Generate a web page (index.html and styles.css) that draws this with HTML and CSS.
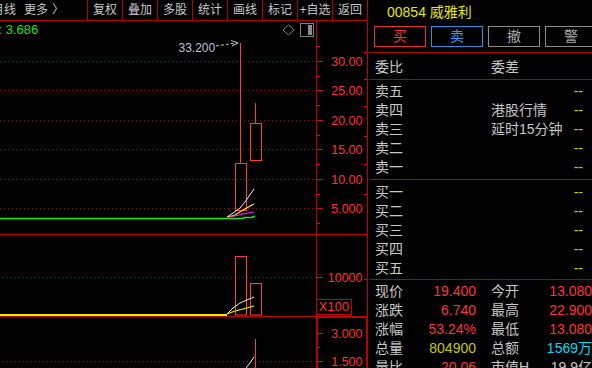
FILE: index.html
```html
<!DOCTYPE html>
<html lang="zh-CN">
<head>
<meta charset="utf-8">
<title>威雅利 00854</title>
<link rel="stylesheet" href="styles.css">
</head>
<body>
<div class="screen">
  <div class="main">
    <div class="toolbar">
      <div class="tb-left"><span class="tb-cut">月线</span><span class="tb-more">更多</span><span class="tb-arrow">〉</span></div>
      <div class="tb-btn">复权</div>
      <div class="tb-btn">叠加</div>
      <div class="tb-btn">多股</div>
      <div class="tb-btn">统计</div>
      <div class="tb-btn">画线</div>
      <div class="tb-btn">标记</div>
      <div class="tb-btn">+自选</div>
      <div class="tb-btn">返回</div>
    </div>

    <div class="pane pane-k">
      <svg class="plot" width="316" height="213" viewBox="0 0 316 213">
        <g class="grid">
          <line x1="0" y1="40.5" x2="316" y2="40.5"/>
          <line x1="0" y1="69.5" x2="316" y2="69.5"/>
          <line x1="0" y1="99.5" x2="316" y2="99.5"/>
          <line x1="0" y1="128.5" x2="316" y2="128.5"/>
          <line x1="0" y1="158.5" x2="316" y2="158.5"/>
          <line x1="0" y1="187.5" x2="316" y2="187.5"/>
        </g>
        <text class="ma-label" x="-1.5" y="12.5">: 3.686</text>
        <path class="ico" d="M283 9 L288.5 4 L294 9 L288.5 14 Z"/>
        <rect class="ico" x="300.5" y="2.5" width="13" height="13"/>
        <rect class="ico-fill" x="308" y="4" width="4" height="10"/>
        <text class="hi-label" x="178.5" y="30.5">33.200</text>
        <path class="arrow-dash" d="M216 25 L236 22"/>
        <path class="arrow-head" d="M231 19.5 L238 22 L232 25"/>
        <line class="candle" x1="240.5" y1="22" x2="240.5" y2="142.5"/>
        <rect class="candle" x="235.5" y="142.5" width="11" height="47"/>
        <line class="candle" x1="255.5" y1="82" x2="255.5" y2="102.5"/>
        <rect class="candle" x="250.5" y="102.5" width="11" height="37"/>
        <polyline class="ma-green" points="0,197.5 243,197.5 244,196.5 252,196.5 253,195.5 255,195.5"/>
        <polyline class="ma-white" points="227,196 233,192 240,187 245,181 254,168"/>
        <polyline class="ma-yellow" points="228,196 235,194 243,189 254,183"/>
        <polyline class="ma-magenta" points="230,196 243,193 254,191"/>
      </svg>
      <div class="axis">
        <svg width="50" height="213" viewBox="0 0 50 213">
          <g class="tick">
            <line x1="0" y1="25.5" x2="3" y2="25.5"/>
            <line x1="0" y1="40.5" x2="6" y2="40.5"/>
            <line x1="0" y1="55.5" x2="3" y2="55.5"/>
            <line x1="0" y1="69.5" x2="6" y2="69.5"/>
            <line x1="0" y1="84.5" x2="3" y2="84.5"/>
            <line x1="0" y1="99.5" x2="6" y2="99.5"/>
            <line x1="0" y1="114.5" x2="3" y2="114.5"/>
            <line x1="0" y1="128.5" x2="6" y2="128.5"/>
            <line x1="0" y1="143.5" x2="3" y2="143.5"/>
            <line x1="0" y1="158.5" x2="6" y2="158.5"/>
            <line x1="0" y1="173.5" x2="3" y2="173.5"/>
            <line x1="0" y1="187.5" x2="6" y2="187.5"/>
            <line x1="0" y1="202.5" x2="3" y2="202.5"/>
            <line x1="47" y1="31.5" x2="50" y2="31.5"/>
            <line x1="47" y1="58.5" x2="50" y2="58.5"/>
            <line x1="47" y1="85.5" x2="50" y2="85.5"/>
            <line x1="47" y1="115.5" x2="50" y2="115.5"/>
            <line x1="47" y1="143.5" x2="50" y2="143.5"/>
            <line x1="47" y1="173.5" x2="50" y2="173.5"/>
          </g>
          <g class="ax">
            <text x="45.5" y="44.5">30.00</text>
            <text x="45.5" y="73.5">25.00</text>
            <text x="45.5" y="103.5">20.00</text>
            <text x="45.5" y="132.5">15.00</text>
            <text x="45.5" y="162.5">10.00</text>
            <text x="45.5" y="191.5">5.000</text>
          </g>
        </svg>
      </div>
    </div>

    <div class="pane pane-vol">
      <svg class="plot" width="316" height="81" viewBox="0 0 316 81">
        <line class="grid" x1="3" y1="42.5" x2="316" y2="42.5"/>
        <rect class="candle" x="235.5" y="21.5" width="11" height="58.5"/>
        <rect class="candle" x="250.5" y="48.5" width="11" height="31.5"/>
        <polyline class="vol-yellow" points="0,80 227,80"/>
        <polyline class="ma-white" points="227,79 233,73 240,68 247,65 254,62"/>
        <polyline class="ma-yellow" points="227,79 235,76 243,74 254,71"/>
      </svg>
      <div class="axis">
        <svg width="50" height="81" viewBox="0 0 50 81">
          <g class="tick">
            <line x1="0" y1="42.5" x2="6" y2="42.5"/>
            <line x1="47" y1="44.5" x2="50" y2="44.5"/>
          </g>
          <g class="ax">
            <text x="45.5" y="46.5">10000</text>
          </g>
        </svg>
        <div class="x100">X100</div>
      </div>
    </div>

    <div class="pane pane-ind">
      <svg class="plot" width="316" height="51" viewBox="0 0 316 51">
        <line class="grid" x1="3" y1="44.5" x2="316" y2="44.5"/>
        <line class="candle" x1="255.5" y1="22" x2="255.5" y2="51"/>
        <polyline class="ma-white" points="246,51 250,46 254,40"/>
      </svg>
      <div class="axis axis-box">
        <svg width="50" height="51" viewBox="0 0 50 51">
          <g class="tick">
            <line x1="0" y1="16.5" x2="6" y2="16.5"/>
            <line x1="0" y1="30.5" x2="3" y2="30.5"/>
            <line x1="0" y1="44.5" x2="6" y2="44.5"/>
          </g>
          <g class="ax">
            <text x="45.5" y="20.5">3.000</text>
            <text x="45.5" y="48.5">1.500</text>
          </g>
        </svg>
      </div>
    </div>
  </div>

  <div class="panel">
    <div class="title">00854 威雅利</div>
    <div class="btns">
      <div class="btn btn-buy">买</div>
      <div class="btn btn-sell">卖</div>
      <div class="btn btn-gray">撤</div>
      <div class="btn btn-gray">警</div>
    </div>
    <div class="sec ratio">
      <span>委比</span><span>委差</span>
    </div>
    <div class="sec book">
      <div class="row"><span>卖五</span><span></span><span class="dash">--</span></div>
      <div class="row"><span>卖四</span><span>港股行情</span><span class="dash">--</span></div>
      <div class="row"><span>卖三</span><span>延时15分钟</span><span class="dash">--</span></div>
      <div class="row"><span>卖二</span><span></span><span class="dash">--</span></div>
      <div class="row"><span>卖一</span><span></span><span class="dash">--</span></div>
    </div>
    <div class="sec book book-buy">
      <div class="row"><span>买一</span><span></span><span class="dash">--</span></div>
      <div class="row"><span>买二</span><span></span><span class="dash">--</span></div>
      <div class="row"><span>买三</span><span></span><span class="dash">--</span></div>
      <div class="row"><span>买四</span><span></span><span class="dash">--</span></div>
      <div class="row"><span>买五</span><span></span><span class="dash">--</span></div>
    </div>
    <div class="sec stats">
      <div class="srow"><span>现价</span><span class="v red">19.400</span><span class="l2">今开</span><span class="v red">13.080</span></div>
      <div class="srow"><span>涨跌</span><span class="v red">6.740</span><span class="l2">最高</span><span class="v red">22.900</span></div>
      <div class="srow"><span>涨幅</span><span class="v red">53.24%</span><span class="l2">最低</span><span class="v red">13.080</span></div>
      <div class="srow"><span>总量</span><span class="v olive">804900</span><span class="l2">总额</span><span class="v cyan">1569万</span></div>
      <div class="srow"><span>量比</span><span class="v red">20.06</span><span class="l2">市值H</span><span class="v gray">19.9亿</span></div>
    </div>
  </div>
</div>
</body>
</html>
```

FILE: styles.css
```css
* {
  box-sizing: border-box;
  margin: 0;
  padding: 0;
}

html, body {
  background: #000;
}

body {
  width: 592px;
  height: 368px;
  overflow: hidden;
  font-family: "Liberation Sans", "Noto Sans CJK SC", sans-serif;
  color: #c8c8c8;
}

.screen {
  display: flex;
  width: 592px;
  height: 368px;
}

/* ---------- left chart ---------- */
.main {
  flex: none;
  width: 368px;
  height: 368px;
  border-right: 1px solid #c00000;
  display: flex;
  flex-direction: column;
  overflow: hidden;
}

.toolbar {
  flex: none;
  height: 21px;
  border-bottom: 1px solid #b00000;
  display: flex;
  font-size: 12px;
  line-height: 20px;
  color: #c8c8c8;
}

.tb-left {
  width: 87px;
  flex: none;
  white-space: nowrap;
  overflow: hidden;
}

.tb-cut {
  margin-left: -8px;
}

.tb-more {
  margin-left: 8px;
}

.tb-arrow {
  margin-left: 4px;
}

.tb-btn {
  flex: none;
  width: 35px;
  border-left: 1px solid #b00000;
  text-align: center;
  white-space: nowrap;
}

.pane {
  display: flex;
  flex: none;
  border-bottom: 1px solid #c00000;
}

.pane-k {
  height: 214px;
}

.pane-vol {
  height: 82px;
}

.pane-ind {
  flex: 1;
  border-bottom: none;
}

.plot {
  display: block;
  flex: none;
  width: 316px;
}

.axis {
  flex: none;
  width: 51px;
  border-left: 1px solid #c00000;
  position: relative;
}

.axis svg {
  display: block;
}

.axis-box {
  box-shadow: inset 1px 1px 0 #c00000, inset -1px 0 0 #c00000;
}

.x100 {
  position: absolute;
  left: -1px;
  top: 64px;
  width: 36px;
  height: 16px;
  border: 1px solid #c00000;
  color: #ff3030;
  font-size: 13px;
  line-height: 14px;
  text-align: center;
  background: #000;
}

/* svg styling */
.grid line, line.grid {
  stroke: #a01010;
  stroke-width: 1;
  stroke-dasharray: 1 3;
}

.tick line {
  stroke: #d01010;
  stroke-width: 1;
}

.ax text {
  font-family: "Liberation Sans", sans-serif;
  font-size: 12.5px;
  fill: #ff3232;
  text-anchor: end;
}

.ma-label {
  font-family: "Liberation Sans", sans-serif;
  font-size: 13px;
  fill: #18e018;
}

.hi-label {
  font-family: "Liberation Sans", sans-serif;
  font-size: 12px;
  fill: #bcc4d4;
}

.arrow-dash {
  fill: none;
  stroke: #c8c8c8;
  stroke-width: 1;
  stroke-dasharray: 3 2;
}

.arrow-head {
  fill: none;
  stroke: #c8c8c8;
  stroke-width: 1;
}

.ico {
  fill: none;
  stroke: #808080;
  stroke-width: 1;
}

.ico-fill {
  fill: #8c8c8c;
}

.candle {
  fill: none;
  stroke: #ff3c3c;
  stroke-width: 1;
}

.ma-green {
  fill: none;
  stroke: #10f010;
  stroke-width: 1.5;
}

.ma-white {
  fill: none;
  stroke: #f0f0f0;
  stroke-width: 1;
}

.ma-yellow {
  fill: none;
  stroke: #f0f000;
  stroke-width: 1.2;
}

.ma-magenta {
  fill: none;
  stroke: #ff20ff;
  stroke-width: 1.2;
}

.vol-yellow {
  fill: none;
  stroke: #f0f000;
  stroke-width: 2;
}

/* ---------- right panel ---------- */
.panel {
  flex: 1;
  min-width: 0;
  overflow: hidden;
  font-size: 14px;
  line-height: 19px;
}

.title {
  height: 26px;
  line-height: 24px;
  padding-left: 19px;
  color: #e8e800;
  white-space: nowrap;
}

.btns {
  display: flex;
  gap: 5px;
  padding-left: 6px;
  height: 21px;
  margin-bottom: 5px;
  overflow: hidden;
}

.btn {
  flex: none;
  width: 52px;
  height: 21px;
  border: 1px solid;
  text-align: center;
  line-height: 19px;
}

.btn-buy {
  border-color: #e83030;
  color: #ff3030;
}

.btn-sell {
  border-color: #2f8fe0;
  color: #3a9cf0;
}

.btn-gray {
  border-color: #8c8c8c;
  color: #a8a8a8;
}

.sec {
  margin-left: 2px;
  border-top: 1px solid #b00000;
}

.ratio {
  height: 27px;
  padding: 5px 0 0 5px;
  display: grid;
  grid-template-columns: 116px 1fr;
}

.book {
  height: 100px;
  padding: 2px 0 2px 5px;
}

.book-buy {
  padding-top: 3px;
  padding-bottom: 1px;
}

.row {
  display: grid;
  grid-template-columns: 116px 1fr auto;
  height: 19px;
  white-space: nowrap;
}

.dash {
  color: #d0d000;
  padding-right: 9px;
}

.stats {
  padding: 2px 0 0 5px;
}

.srow {
  display: grid;
  grid-template-columns: 45px 56px 60px 1fr;
  height: 19px;
  white-space: nowrap;
}

.l2 {
  padding-left: 15px;
}

.v {
  text-align: right;
}

.red {
  color: #ff3434;
}

.olive {
  color: #c8c800;
}

.cyan {
  color: #00d8f8;
}

.gray {
  color: #c8c8c8;
}
```
